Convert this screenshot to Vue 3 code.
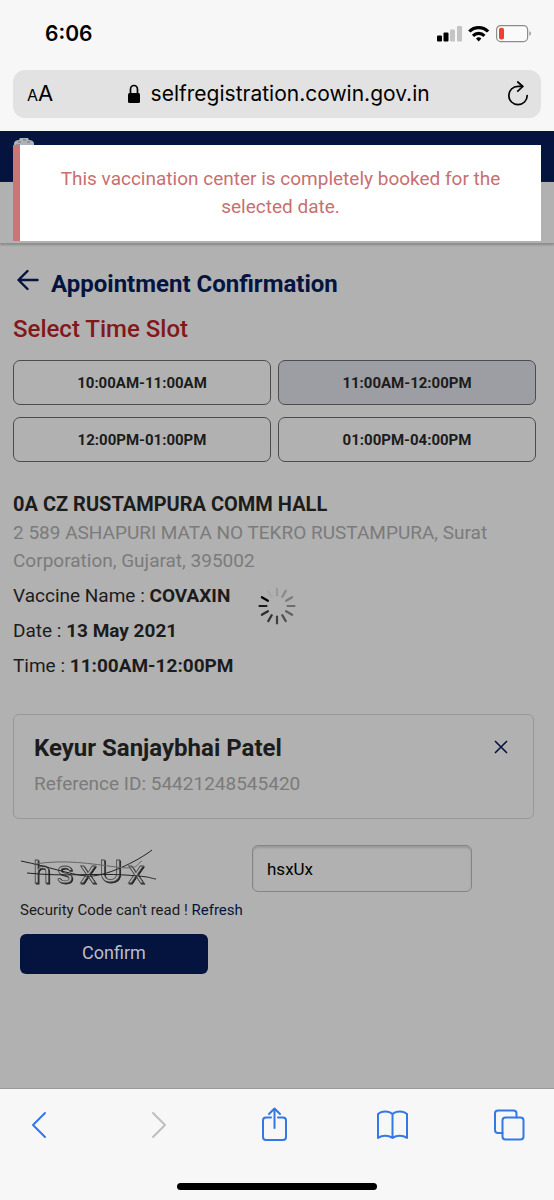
<script setup>
import { ref } from 'vue'

const slots = ['10:00AM-11:00AM', '11:00AM-12:00PM', '12:00PM-01:00PM', '01:00PM-04:00PM']
const selected = ref('11:00AM-12:00PM')
const code = ref('hsxUx')

const spokes = [0.12, 0.22, 0.3, 0.38, 0.46, 0.56, 0.64, 0.7, 0.76, 0.86, 1, 0.05].map((opacity, i) => ({
  opacity,
  turn: `rotate(${i * 30} 20 20)`,
}))
</script>

<template>
  <div class="screen">
    <header class="browser-top">
      <div class="status">
        <span class="clock">6:06</span>
        <svg class="status-icons" width="96" height="18" viewBox="0 0 96 18" aria-hidden="true">
          <rect x="1" y="10.500" width="5" height="6" rx="1" />
          <rect x="7.500" y="7.500" width="5" height="9" rx="1" />
          <rect x="14" y="4.500" width="5" height="12" rx="1" fill="#c4c4c4" />
          <rect x="21" y="1" width="5" height="15.500" rx="1" fill="#c4c4c4" />
          <g fill="none" stroke="#000" stroke-width="3.200">
            <path d="M33.300 6.500a13.200 13.200 0 0 1 18.800 0" />
            <path d="M37 10.800a8 8 0 0 1 11.400 0" />
          </g>
          <path d="M40 13.500a4 4 0 0 1 5.400 0L42.700 16.500z" />
          <rect x="60.600" y="0.600" width="31" height="16" rx="4" fill="#fafafa" stroke="#8c8c8c" stroke-width="1.200" />
          <rect x="63" y="2.700" width="5" height="11.800" rx="2" fill="#ee4130" />
          <path d="M93.500 6q2.500 2.500 0 5z" fill="#777" />
        </svg>
      </div>
      <div class="address">
        <button class="plain text-size" aria-label="Text size"><small>A</small>A</button>
        <div class="url">
          <svg width="14" height="20" viewBox="0 0 14 20" aria-hidden="true">
            <rect x="1" y="9" width="12" height="10" rx="1.500" />
            <path d="M3.500 9V5.500a3.500 4 0 0 1 7 0V9" fill="none" stroke="#000" stroke-width="1.700" />
          </svg>
          <span>selfregistration.cowin.gov.in</span>
        </div>
        <button class="plain" aria-label="Reload">
          <svg width="22" height="26" viewBox="0 0 22 26" fill="none" stroke="#000" stroke-width="1.700" stroke-linecap="round" stroke-linejoin="round">
            <path d="M20.200 14.500a9.200 9.200 0 1 1-9.200-9.200h4.500" />
            <path d="M10.800 1l5 4.500-5 4.700" />
          </svg>
        </button>
      </div>
    </header>

    <main class="page">
      <div class="navy">
        <svg width="22" height="12" viewBox="0 0 22 12" aria-hidden="true">
          <path d="M1 12V5q1-3 5-3l1-2h8l1 2q4 0 5 3v7z" fill="#b0b2b8" />
          <path d="M5 4h3M10 2h3M14 4h3M3 7h4" stroke="#6f737d" />
        </svg>
      </div>
      <div class="site-bar"></div>
      <div class="toast" role="alert">This vaccination center is completely booked for the selected date.</div>

      <div class="content">
        <div class="heading">
          <button class="plain" aria-label="Back">
            <svg width="22" height="22" viewBox="0 0 22 22" fill="none" stroke="#04143f" stroke-width="2.400" stroke-linecap="round" stroke-linejoin="round">
              <path d="M20.500 11H2M10.500 2L1.500 11l9 9" />
            </svg>
          </button>
          <h1>Appointment Confirmation</h1>
        </div>
        <h2>Select Time Slot</h2>
        <div class="slots">
          <button v-for="s in slots" :key="s" class="slot" :class="{ active: s === selected }" @click="selected = s">{{ s }}</button>
        </div>

        <section class="center">
          <h3>0A CZ RUSTAMPURA COMM HALL</h3>
          <p class="muted">2 589 ASHAPURI MATA NO TEKRO RUSTAMPURA, Surat Corporation, Gujarat, 395002</p>
          <p class="fact">Vaccine Name : <b>COVAXIN</b></p>
          <p class="fact">Date : <b>13 May 2021</b></p>
          <p class="fact">Time : <b>{{ selected }}</b></p>
          <svg class="spinner" width="40" height="40" viewBox="0 0 40 40" role="img" aria-label="Loading">
            <path v-for="s in spokes" :key="s.turn" d="M20 2.500v7" :transform="s.turn" :stroke-opacity="s.opacity" stroke="#000" stroke-width="2.200" stroke-linecap="round" />
          </svg>
        </section>

        <section class="person">
          <div>
            <h2>Keyur Sanjaybhai Patel</h2>
            <p class="muted">Reference ID: 54421248545420</p>
          </div>
          <button class="plain" aria-label="Remove">
            <svg width="14" height="14" viewBox="0 0 14 14" fill="none" stroke="#04143f" stroke-width="1.600">
              <path d="M1 1l12 12M13 1L1 13" />
            </svg>
          </button>
        </section>

        <form class="verify" @submit.prevent>
          <div class="captcha-row">
            <svg class="captcha" width="140" height="40" viewBox="0 0 140 40" role="img" aria-label="Security code">
              <g class="ink">
                <text x="13" y="34">h</text>
                <text x="37" y="34">s</text>
                <text x="60" y="34">x</text>
                <text x="79" y="33">U</text>
                <text x="108" y="34">x</text>
              </g>
              <g fill="none" stroke="#222">
                <path d="M1 12C30 18 48 25 66 27S118 12 132 1" />
                <path d="M7 24C45 28 75 24 105 26S128 29 136 30" />
                <path d="M15 15C45 10 72 15 96 18S115 16 122 12" stroke="#666" />
              </g>
            </svg>
            <input v-model="code" type="text" aria-label="Security code" />
          </div>
          <p class="hint">Security Code can't read ! <a href="#">Refresh</a></p>
          <button class="confirm">Confirm</button>
        </form>
      </div>
    </main>

    <footer class="browser-bottom">
      <nav>
        <button class="plain" aria-label="Previous page">
          <svg width="32" height="36" viewBox="0 0 32 36"><path d="M17 6L5 18l12 12" /></svg>
        </button>
        <button class="plain" aria-label="Next page" disabled>
          <svg class="off" width="32" height="36" viewBox="0 0 32 36"><path d="M8 6l12 12L8 30" /></svg>
        </button>
        <button class="plain" aria-label="Share">
          <svg width="32" height="36" viewBox="0 0 32 36"><path d="M10 10.500H5q-3 0-3 3V30q0 3 3 3h17q3 0 3-3V13.500q0-3-3-3h-5M13.500 21V1.500M8 7l5.500-5.500L19 7" /></svg>
        </button>
        <button class="plain" aria-label="Bookmarks">
          <svg width="32" height="36" viewBox="0 0 32 36"><path d="M14.500 7C11 3.500 3.500 3.500 0 7v24c4-3 10.500-3 14.500 0 4-3 10.500-3 14.500 0V7C25.500 3.500 18 3.500 14.500 7zM14.500 7v24" /></svg>
        </button>
        <button class="plain" aria-label="Tabs">
          <svg width="32" height="36" viewBox="0 0 32 36"><path d="M8.500 26H4q-3 0-3-3V6.500q0-3 3-3h15.500q3 0 3 3v4" /><rect x="8.500" y="10.500" width="21" height="22" rx="3" /></svg>
        </button>
      </nav>
      <div class="home"></div>
    </footer>
  </div>
</template>

<style>
body { margin: 0; background: #b1b1b1; }
</style>

<style scoped>
* { box-sizing: border-box; }
.screen { min-height: 100vh; display: flex; flex-direction: column; font-family: Roboto, "Liberation Sans", sans-serif; font-size: 19px; line-height: 28px; color: #1c1c1c; }
h1, h2, h3, p { margin: 0; }
svg { display: block; flex: none; }
button { font: inherit; cursor: pointer; }
.plain { border: 0; background: none; padding: 0; color: inherit; }

.browser-top { background: #f7f7f7; padding: 0 13px 13px; font-family: Inter, "Liberation Sans", sans-serif; color: #000; }
.status { height: 70px; padding: 20px 9px 0 32px; display: flex; justify-content: space-between; }
.clock { font-size: 21px; font-weight: 600; }
.status-icons { margin-top: 5px; }
.address { height: 48px; background: #e2e2e2; border-radius: 12px; padding: 0 12px 0 14px; display: flex; align-items: center; justify-content: space-between; }
.text-size { font-size: 22px; }
.text-size small { font-size: 16px; }
.url { display: flex; align-items: center; gap: 10px; margin-right: 4px; font-size: 21px; }

.page { flex: 1; position: relative; background: #b1b1b1; }
.navy { height: 51px; background: #04143f; padding: 7px 13px; }
.site-bar { height: 62px; border-bottom: 1px solid #8f8f8f; box-shadow: 0 1px 2px #888; }
.toast { position: absolute; top: 14px; left: 13px; right: 13px; padding: 20px 36px; background: #fff; border-left: 7px solid #cb7674; color: #c86f70; text-align: center; }

.content { padding: 22px 18px 40px 13px; }
.heading { display: flex; align-items: center; gap: 12px; padding-left: 4px; color: #04143f; }
.heading .plain { padding-bottom: 8px; }
h1, h2 { font-size: 24px; line-height: 36px; font-weight: 500; }
h1 { font-weight: 700; }
.content > h2 { margin-top: 9px; color: #82181a; }
.slots { display: grid; grid-template-columns: 1fr 1fr; gap: 12px 7px; margin-top: 13px; }
.slot { height: 45px; border: 1px solid #4c4c4c; border-radius: 7px; background: none; color: #1c1c1c; font-size: 15px; font-weight: 700; }
.slot.active { background: #9d9ea3; }

.center { position: relative; margin-top: 27px; }
h3 { font-size: 20px; line-height: 30px; font-weight: 700; }
.muted { color: #7b7b7b; }
.fact { margin-top: 7px; }
.spinner { position: absolute; left: 244px; top: 97px; }

.person { margin: 34px 2px 0 0; height: 105px; padding: 15px 25px 0 20px; border: 1px solid #989898; border-radius: 6px; display: flex; justify-content: space-between; align-items: flex-start; }
.person h2 { font-weight: 700; }
.person .muted { margin-top: 4px; }
.person .plain { margin-top: 10px; }

.verify { margin: 26px 0 0 7px; }
.captcha-row { display: flex; align-items: center; justify-content: space-between; padding-right: 64px; }
.captcha { font: 32px "Liberation Sans", sans-serif; }
.ink { fill: #b1b1b1; stroke: #444; stroke-width: 0.8; filter: drop-shadow(1px 1px 0 #222); }
input { width: 220px; height: 47px; padding: 0 14px; border: 1px solid #858585; border-radius: 6px; background: transparent; box-shadow: inset 0 2px 2px #999; font: 17px Roboto, sans-serif; color: #000; outline: 0; }
.hint { font-size: 15px; line-height: 24px; margin-top: 6px; }
a { color: #04143f; text-decoration: none; }
.confirm { margin-top: 12px; width: 188px; height: 40px; padding: 0 0 2px; border: 0; border-radius: 6px; background: #04143f; color: #bcbfc8; font-size: 18px; }

.browser-bottom { background: #f7f7f7; border-top: 1px solid #999; padding: 18px 28px 10px; }
nav { display: flex; justify-content: space-between; }
nav svg { fill: none; stroke: #3478e8; stroke-width: 2; stroke-linecap: round; stroke-linejoin: round; overflow: visible; }
nav svg.off { stroke: #bfbfbf; }
.home { width: 40%; height: 7px; margin: 40px auto 0; border-radius: 4px; background: #000; }
</style>
